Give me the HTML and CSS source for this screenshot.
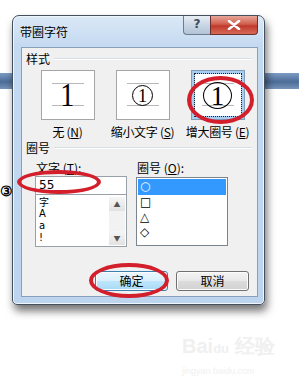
FILE: index.html
```html
<!DOCTYPE html>
<html>
<head>
<meta charset="utf-8">
<link rel="stylesheet" href="styles.css">
</head>
<body>
<div class="stage">
  <div class="bar bar-left"></div>
  <div class="bar bar-right"></div>
  <div class="outside-mark">③</div>

  <div class="dialog">
    <div class="titlebar">
      <span class="title">带圈字符</span>
      <div class="caption">
        <div class="cap-help">?</div>
        <div class="cap-close">
          <svg width="14" height="10" viewBox="0 0 14 10"><path d="M2 1 L12 9 M12 1 L2 9" stroke="#fff" stroke-width="2.6" stroke-linecap="round"/></svg>
        </div>
      </div>
    </div>

    <div class="client">
      <div class="group-head"><span>样式</span><i class="rule"></i></div>
      <div class="styles">
        <div class="opt">
          <div class="preview">
            <i class="guide top"></i><i class="guide bottom"></i>
            <span class="digit">1</span>
          </div>
          <div class="opt-label">无 (<u>N</u>)</div>
        </div>
        <div class="opt">
          <div class="preview">
            <i class="guide top"></i><i class="guide bottom"></i>
            <span class="circ small"><span>1</span></span>
          </div>
          <div class="opt-label">缩小文字 (<u>S</u>)</div>
        </div>
        <div class="opt">
          <div class="preview selected">
            <i class="guide top"></i><i class="guide bottom"></i>
            <span class="circ big"><span>1</span></span>
          </div>
          <div class="opt-label">增大圈号 (<u>E</u>)</div>
        </div>
      </div>

      <div class="group-head second"><span>圈号</span><i class="rule"></i></div>
      <div class="fields">
        <div class="col">
          <div class="col-label">文字 (<u>T</u>):</div>
          <div class="combo">
            <div class="edit">55</div>
            <div class="list">
              <div class="items">
                <div class="cjk">字</div><div>A</div><div>a</div><div>!</div>
              </div>
              <div class="scroll">
                <div class="arrow">▲</div>
                <div class="arrow">▼</div>
              </div>
            </div>
          </div>
        </div>
        <div class="col">
          <div class="col-label">圈号 (<u>O</u>):</div>
          <div class="list2">
            <div class="row sel">○</div>
            <div class="row">□</div>
            <div class="row">△</div>
            <div class="row">◇</div>
          </div>
        </div>
      </div>

      <div class="buttons">
        <div class="btn default">确定</div>
        <div class="btn">取消</div>
      </div>
    </div>
  </div>

  <div class="mark m1"></div>
  <div class="mark m2"></div>
  <div class="mark m3"></div>

  <div class="watermark">
    <div class="wm-top">Bai<span class="paw">du</span> 经验</div>
    <div class="wm-url">jingyan.baidu.com</div>
  </div>
</div>
</body>
</html>
```

FILE: styles.css
```css
* { box-sizing: border-box; }
html, body { margin: 0; padding: 0; background: #fff; }
body { font-family: "Noto Sans CJK SC", "Noto Sans", sans-serif; font-size: 12px; color: #000; }

.stage { position: relative; width: 299px; height: 389px; overflow: hidden; background: #fff; padding-top: 15px; padding-left: 12px; }

.bar { position: absolute; top: 73px; height: 16px; background: linear-gradient(#7d9cc4, #4c6d98 55%, #7794ba); }
.bar-left { left: 0; width: 14px; }
.bar-right { left: 262px; width: 37px; }

.outside-mark { position: absolute; left: 0; top: 183px; font-family: "DejaVu Serif", serif; font-size: 14px; font-weight: bold; line-height: 16px; }

.dialog {
  position: relative;
  width: 253px; height: 290px;
  border: 1px solid #44505e;
  border-radius: 7px 7px 5px 5px;
  background: linear-gradient(#dbe8f6, #c4daf1 30px, #bcd4ee);
  box-shadow: 2px 6px 9px rgba(0,0,0,0.55), inset 0 0 0 1px #eef5fc;
  padding: 0 6px 7px 7px;
  display: flex; flex-direction: column;
}

.titlebar { height: 31px; display: flex; align-items: flex-start; }
.title { margin-top: 9px; font-size: 12px; line-height: 14px; color: #000; }
.caption { margin-left: auto; display: flex; }
.cap-help {
  width: 27px; height: 19px;
  border: 1px solid #6e7d8e; border-top: none; border-right: none;
  border-radius: 0 0 0 4px;
  background: linear-gradient(#e8eef5, #c9d6e4 50%, #b3c4d7);
  color: #3a4a5c; font-family: "DejaVu Sans", sans-serif; font-size: 12px; font-weight: bold;
  text-align: center; line-height: 17px;
}
.cap-close {
  width: 48px; height: 19px;
  border: 1px solid #6a3030; border-top: none;
  border-radius: 0 0 4px 0;
  background: linear-gradient(#e8a69a, #d0604c 45%, #c0392b 55%, #d66b57);
  display: flex; align-items: center; justify-content: center;
}

.client {
  flex: 1;
  margin-left: 1px;
  background: #f0f0f0;
  border: 1px solid #8aa0b8;
  padding: 4px 8px 0 4px;
  display: flex; flex-direction: column;
}

.group-head { display: flex; align-items: center; height: 14px; line-height: 14px; }
.group-head span { font-size: 12px; }
.group-head .rule { flex: 1; height: 2px; margin-left: 4px; margin-right: -3px; border-top: 1px solid #d5dfe5; border-bottom: 1px solid #fff; }
.group-head.second { margin-top: 2px; }

.styles { display: grid; grid-template-columns: 75px 75px 75px; margin-top: 4px; padding-left: 4px; }
.opt { display: flex; flex-direction: column; align-items: center; }
.preview {
  position: relative;
  width: 54px; height: 50px;
  background: #fff; border: 1px solid #a5a5a5;
  display: flex; align-items: center; justify-content: center;
}
.preview.selected { border-color: #7f9db9; box-shadow: inset 0 0 0 3px #a9cdef; outline: 1px dotted #222; outline-offset: -4px; }
.guide { position: absolute; left: 10px; width: 32px; height: 1px; background: #b8b8b8; }
.guide.top { top: 12px; }
.guide.bottom { top: 34px; }
.digit { position: relative; font-family: "Liberation Serif", serif; font-size: 33px; line-height: 30px; margin-top: -1px; transform: scaleX(0.85); }
.circ { position: relative; border: 1.5px solid #000; border-radius: 50%; display: flex; align-items: center; justify-content: center; font-family: "Liberation Serif", serif; }
.circ.small { width: 21px; height: 21px; font-size: 18px; line-height: 18px; }
.circ.big { width: 29px; height: 27px; font-size: 27px; line-height: 26px; }
.circ span { margin-top: 1px; }

.opt-label { margin-top: 5px; font-size: 12px; line-height: 14px; white-space: nowrap; letter-spacing: -0.3px; }
.opt-label u { text-decoration: underline; }

.fields { display: flex; gap: 9px; padding-left: 9px; margin-top: 6px; }
.col { width: 92px; }
.col-label { font-size: 12px; line-height: 14px; margin-left: 1px; }
.combo { margin-top: 1px; }
.edit { height: 19px; background: #fff; border: 1px solid #9aa0a8; padding-left: 3px; line-height: 17px; font-family: "DejaVu Sans", sans-serif; font-size: 12px; }
.list { height: 52px; background: #fff; border: 1px solid #9aa0a8; border-top: none; display: flex; }
.items { flex: 1; padding: 1px 0 0 3px; font-family: "DejaVu Sans", sans-serif; font-size: 10px; line-height: 12px; }
.items div { height: 12px; }
.items .cjk { font-family: "Noto Sans CJK SC", sans-serif; font-size: 10px; line-height: 12px; }
.scroll { width: 16px; margin: 2px 1px 1px 0; display: flex; flex-direction: column; justify-content: space-between; background: #f2f2f2; }
.arrow { height: 14px; font-size: 7px; line-height: 14px; text-align: center; color: #555; background: linear-gradient(#f6f6f6, #e2e2e2); }

.list2 { margin-top: 2px; height: 69px; background: #fff; border: 1px solid #7a8590; padding: 1px; }
.row { height: 15px; line-height: 15px; padding-left: 2px; font-family: "DejaVu Sans", sans-serif; font-size: 12px; }
.row.sel { height: 16px; background: #3399ff; color: #fff; }

.buttons { display: flex; justify-content: flex-end; gap: 8px; margin-top: 24px; }
.btn {
  width: 73px; height: 20px;
  border: 1px solid #707070; border-radius: 3px;
  background: linear-gradient(#f4f4f4, #e8e8e8 50%, #dcdcdc 51%, #d2d2d2);
  box-shadow: inset 0 0 0 1px #fcfcfc;
  text-align: center; line-height: 18px; font-size: 12px;
}
.btn.default { border-color: #3c7fb1; background: linear-gradient(#eaf6fd, #d9f0fc 50%, #bee6fd 51%, #a7d9f5); }

.mark { position: absolute; border: 4px solid #d21f2b; border-radius: 50%; }
.m1 { left: 187px; top: 76px; width: 67px; height: 48px; }
.m2 { left: 17px; top: 170px; width: 84px; height: 24px; }
.m3 { left: 89px; top: 263px; width: 80px; height: 35px; }

.watermark { position: absolute; left: 182px; top: 334px; color: #f0f0f0; font-family: "Liberation Sans", sans-serif; }
.wm-top { font-size: 20px; font-weight: bold; line-height: 24px; }
.paw { font-size: 13px; }
.wm-url { font-size: 9px; line-height: 12px; margin-top: 4px; }
```
